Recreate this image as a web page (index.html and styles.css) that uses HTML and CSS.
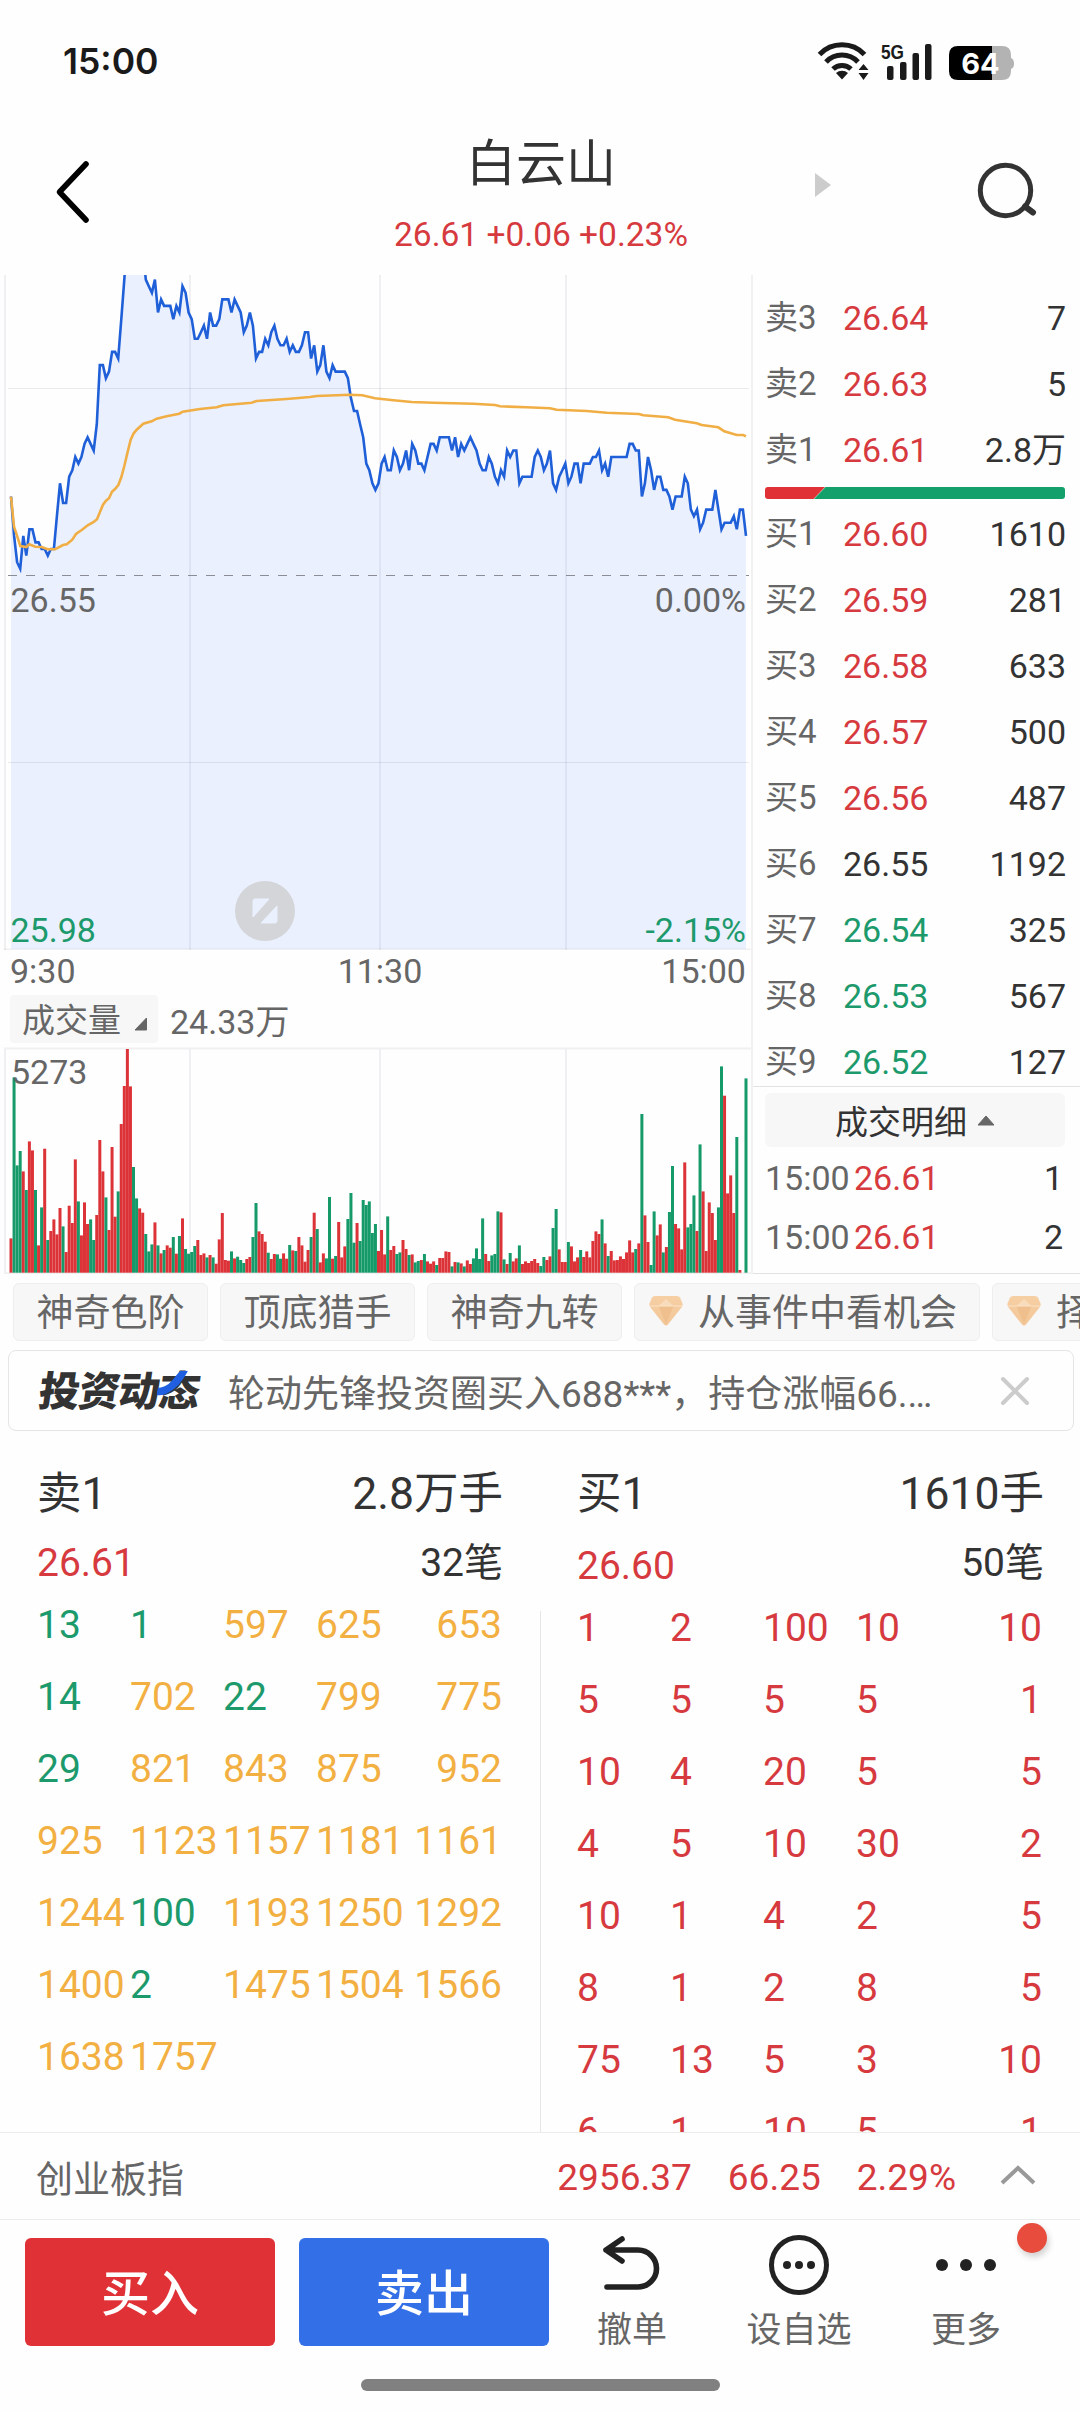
FILE: index.html
```html
<!DOCTYPE html>
<html lang="zh-CN">
<head>
<meta charset="utf-8">
<title>白云山 26.61</title>
<link rel="stylesheet" href="styles.css">
</head>
<body>
<div class="status">
  <span class="clock">15:00</span>
  <svg class="status-icons" width="204" height="44" viewBox="0 0 204 44">
    <g fill="none" stroke="#1a1a1a" stroke-width="5">
      <path d="M2.5 15.500a31 31 0 0 1 45 0"/>
      <path d="M9 23a22 22 0 0 1 32 0"/>
      <path d="M16 30a13 13 0 0 1 18 0"/>
    </g>
    <path d="M25 40.500l-6-6.500a9 9 0 0 1 12 0zM46.500 25l5 6h-10zM46.500 41l5-7h-10z" fill="#1a1a1a"/>
    <text class="net" x="64" y="20" textLength="23" lengthAdjust="spacingAndGlyphs">5G</text>
    <g fill="#1a1a1a">
      <rect x="70" y="27" width="6.500" height="14" rx="2"/><rect x="83" y="23" width="6.500" height="18" rx="2"/>
      <rect x="95.500" y="14" width="6.500" height="27" rx="2"/><rect x="108" y="5" width="6.500" height="36" rx="2"/>
    </g>
    <path d="M175 7h10q9 0 9 9v3q3 1 3 5.500t-3 5.500v2q0 9-9 9h-10z" fill="#b3b3b3"/>
    <path d="M175 7v34h-34q-9 0-9-9v-16q0-9 9-9z" fill="#000"/>
    <text class="charge" x="163.500" y="34.500" text-anchor="middle">64</text>
  </svg>
</div>

<header class="head">
  <svg class="back" width="40" height="66" viewBox="0 0 40 66"><path d="M34 5L7.500 33L34 61" fill="none" stroke="#000" stroke-width="5.600" stroke-linecap="round" stroke-linejoin="round"/></svg>
  <div class="name">
    <h1>白云山</h1>
    <p>26.61 +0.06 +0.23%</p>
  </div>
  <svg class="next" width="16" height="24" viewBox="0 0 16 24"><path d="M0 0L16 12L0 24z" fill="#ccc"/></svg>
  <svg class="search" width="64" height="64" viewBox="0 0 64 64"><g fill="none" stroke="#333" stroke-width="5"><circle cx="31.500" cy="32.500" r="25.200"/><path d="M51 48.500L59 54.500" stroke-linecap="round" stroke-width="6"/></g></svg>
</header>

<main class="quote">
  <section class="charts">
    <svg class="price" width="751" height="675" viewBox="0 275 751 675">
      <path class="area" id="area"/>
      <path class="grid-v" d="M5 275V950M190 275V950M380 275V950M566 275V950"/>
      <path class="grid-h" d="M8 388.500H749M8 762.500H749"/>
      <path class="grid-v" d="M4 949.500H751"/>
      <path class="zero" d="M8 575.500H749"/>
      <path class="line" id="line"/>
      <polyline class="avg" points="11,496.700 14,526.700 17,535.700 20.300,546 26.300,547 29.300,544.300 35.300,546.700 41.700,547 47.700,549.300 55,549.300 63,545 66.700,544.300 72.300,539.700 76,534 81.700,530 87.700,525.300 93.700,522 97,519.300 103,504.700 106,500.700 109,498.300 112,491.700 115,489 118.300,485 121.300,477.300 124.300,466 127.700,451.700 130.700,439.700 133.700,433.300 136.700,429.700 143.300,423.700 151.700,421.300 156.700,418.700 166.700,416.300 179.300,413.700 182.700,411.700 200,409 216.700,407.300 223.300,405.300 251.700,402.700 256.700,401 286.700,399 310,397 316.700,396 350,394.700 362.300,395.300 375,398.300 393.300,400.300 411.700,402 433.300,402.700 473.300,403.700 495,405 500,406.300 526.700,407.300 550,408.300 556.700,409.700 586.700,411 606.700,412.700 639,414 643.300,415.300 668.300,417.300 675,419.700 696.700,423.300 701.700,425 718.300,427.300 724.300,431.300 736.700,435 743.300,435 746,436.300"/>
      <circle cx="265" cy="911" r="30" fill="#d4d5d9"/>
      <path d="M255 899H269L253 917V901q0-2 2-2zM277 906V921q0 2-2 2H261z" fill="#eaf0fe" stroke="#eaf0fe" stroke-linejoin="round"/>
      <text class="t" x="10.500" y="612">26.55</text>
      <text class="t end" x="746" y="612">0.00%</text>
      <text class="t down" x="10.500" y="942">25.98</text>
      <text class="t end down" x="746" y="942">-2.15%</text>
    </svg>
    <div class="axis"><span>9:30</span><span>11:30</span><span>15:00</span></div>
    <div class="vol-head">
      <span class="vol-pick">成交量<svg width="14" height="14" viewBox="0 0 14 14"><path d="M12.500 1V13H1z" fill="#666" stroke="#666" stroke-linejoin="round"/></svg></span>
      <span>24.33万</span>
    </div>
    <svg class="volume" width="751" height="227" viewBox="0 1047 751 227">
      <path class="grid-v" d="M5 1049V1273.500M190 1049V1273M380 1049V1273M566 1049V1273M4 1048.500H751M4 1273.200H751"/>
      <g id="bars"></g>
      <text class="t" x="11" y="1084">5273</text>
    </svg>
  </section>

  <section class="book">
    <div class="levels">
      <div class="lv"><span>卖3</span><b class="up">26.64</b><i>7</i></div>
      <div class="lv"><span>卖2</span><b class="up">26.63</b><i>5</i></div>
      <div class="lv"><span>卖1</span><b class="up">26.61</b><i>2.8万</i></div>
      <svg class="ratio" width="300" height="12" viewBox="0 0 300 12"><path d="M3 0H60L48.500 12H3q-3 0-3-3V3q0-3 3-3z" fill="#e03136"/><path d="M60.500 0H297q3 0 3 3V9q0 3-3 3H49z" fill="#14a06a"/></svg>
      <div class="lv"><span>买1</span><b class="up">26.60</b><i>1610</i></div>
      <div class="lv"><span>买2</span><b class="up">26.59</b><i>281</i></div>
      <div class="lv"><span>买3</span><b class="up">26.58</b><i>633</i></div>
      <div class="lv"><span>买4</span><b class="up">26.57</b><i>500</i></div>
      <div class="lv"><span>买5</span><b class="up">26.56</b><i>487</i></div>
      <div class="lv"><span>买6</span><b>26.55</b><i>1192</i></div>
      <div class="lv"><span>买7</span><b class="down">26.54</b><i>325</i></div>
      <div class="lv"><span>买8</span><b class="down">26.53</b><i>567</i></div>
      <div class="lv"><span>买9</span><b class="down">26.52</b><i>127</i></div>
    </div>
    <div class="trades">
      <div class="trades-title">成交明细<svg width="18" height="11" viewBox="0 0 18 11"><path d="M9 1L17 10H1z" fill="#666" stroke="#666" stroke-linejoin="round"/></svg></div>
      <div class="tr"><span>15:00</span><b class="up">26.61</b><i>1</i></div>
      <div class="tr"><span>15:00</span><b class="up">26.61</b><i>2</i></div>
    </div>
  </section>
</main>

<svg width="0" height="0" class="defs">
  <defs>
    <linearGradient id="gem-fill" x1="0" y1="0" x2="0" y2="1"><stop offset="0" stop-color="#f6cfa4"/><stop offset="1" stop-color="#f3c797"/></linearGradient>
    <symbol id="gem" viewBox="0 0 34 30">
      <path d="M6 0H28Q30 0 31 1.500L33.500 7.500Q34 9.500 32.500 11.500L19 28.500Q17 30.500 15 28.500L1.500 11.500Q0 9.500 .5 7.500L3 1.500Q4 0 6 0z" fill="url(#gem-fill)"/>
      <path d="M9.500 10L17 3L24.500 10z" fill="#f9dcbc"/><path d="M9.500 10H24.500L17 28.500z" fill="#efc08d"/><path d="M1 10H33" stroke="#fae3c8"/>
    </symbol>
  </defs>
</svg>

<nav class="chips">
  <span class="chip">神奇色阶</span><span class="chip">顶底猎手</span><span class="chip">神奇九转</span>
  <span class="chip gem"><svg width="34" height="30"><use href="#gem"/></svg>从事件中看机会</span>
  <span class="chip gem"><svg width="34" height="30"><use href="#gem"/></svg>择时</span>
</nav>

<div class="news">
  <strong class="brand">投资动态<svg width="28" height="26" viewBox="0 0 28 26"><path d="M20 0H28Q22 16 11 22Q6 25 0 24V17Q9 16 13 10Q16 6 20 0z" fill="#1f5fe0"/></svg></strong>
  <span class="news-text">轮动先锋投资圈买入688***，持仓涨幅66.…</span>
  <svg width="30" height="30" viewBox="0 0 30 30"><path d="M3 3L27 27M27 3L3 27" stroke="#ccc" stroke-width="4" stroke-linecap="round"/></svg>
</div>

<section class="queues">
  <div class="queue">
    <div class="q-top"><span>卖1</span><span>2.8万手</span></div>
    <div class="q-sub"><span class="up">26.61</span><span>32笔</span></div>
    <div class="cells">
      <b class="down">13</b><b class="down">1</b><b>597</b><b>625</b><b>653</b>
      <b class="down">14</b><b>702</b><b class="down">22</b><b>799</b><b>775</b>
      <b class="down">29</b><b>821</b><b>843</b><b>875</b><b>952</b>
      <b>925</b><b>1123</b><b>1157</b><b>1181</b><b>1161</b>
      <b>1244</b><b class="down">100</b><b>1193</b><b>1250</b><b>1292</b>
      <b>1400</b><b class="down">2</b><b>1475</b><b>1504</b><b>1566</b>
      <b>1638</b><b>1757</b>
    </div>
  </div>
  <div class="rule"></div>
  <div class="queue buy">
    <div class="q-top"><span>买1</span><span>1610手</span></div>
    <div class="q-sub"><span class="up">26.60</span><span>50笔</span></div>
    <div class="cells">
      <b>1</b><b>2</b><b>100</b><b>10</b><b>10</b>
      <b>5</b><b>5</b><b>5</b><b>5</b><b>1</b>
      <b>10</b><b>4</b><b>20</b><b>5</b><b>5</b>
      <b>4</b><b>5</b><b>10</b><b>30</b><b>2</b>
      <b>10</b><b>1</b><b>4</b><b>2</b><b>5</b>
      <b>8</b><b>1</b><b>2</b><b>8</b><b>5</b>
      <b>75</b><b>13</b><b>5</b><b>3</b><b>10</b>
      <b>6</b><b>1</b><b>10</b><b>5</b><b>1</b>
    </div>
  </div>
</section>

<div class="index">
  <span class="index-name">创业板指</span>
  <span class="up">2956.37</span><span class="up">66.25</span><span class="up">2.29%</span>
  <svg width="38" height="22" viewBox="0 0 38 22"><path d="M3 19L19 4L35 19" fill="none" stroke="#999" stroke-width="4"/></svg>
</div>

<footer class="actions">
  <button class="btn buy-btn"><span>买入</span></button>
  <button class="btn sell-btn"><span>卖出</span></button>
  <div class="act cancel">
    <svg width="64" height="64" viewBox="0 0 64 64"><path d="M6 17H38a18.500 18.500 0 0 1 0 37H7M22 6L6 17L22 28" fill="none" stroke="#222" stroke-width="5.600" stroke-linecap="round" stroke-linejoin="round"/></svg>
    撤单
  </div>
  <div class="act watch">
    <svg width="64" height="64" viewBox="0 0 64 64"><circle cx="32" cy="32" r="27.500" fill="none" stroke="#222" stroke-width="5"/><g fill="#222"><circle cx="20" cy="32" r="4"/><circle cx="32" cy="32" r="4"/><circle cx="44" cy="32" r="4"/></g></svg>
    设自选
  </div>
  <div class="act more">
    <svg width="64" height="64" viewBox="0 0 64 64"><g fill="#222"><circle cx="8" cy="32" r="6"/><circle cx="32" cy="32" r="6"/><circle cx="56" cy="32" r="6"/></g></svg>
    更多
    <span class="dot"></span>
  </div>
</footer>
<div class="home"></div>
<script src="chart.js"></script>
</body>
</html>
```
FILE: styles.css
```css
* { box-sizing: border-box; margin: 0; padding: 0; }
b, i, h1 { font-weight: 400; font-style: normal; }
svg { display: block; flex: none; }

body {
  width: 1080px;
  height: 2412px;
  overflow: hidden;
  background: #fefefe;
  color: #333;
  font-family: Roboto, "Noto Sans CJK SC", sans-serif;
  font-size: 34px;
}

.up { color: #d63a3e; }
.down { color: #1d9a6c; fill: #1d9a6c; }

/* Status bar */
.status { display: flex; justify-content: space-between; height: 125px; padding: 39px 59px 0 63px; }
.clock { font: 600 35.5px/46px Inter, Roboto, sans-serif; color: #1a1a1a; }
.net { font: 700 21px "Liberation Sans", sans-serif; fill: #1a1a1a; }
.charge { font: 700 29px Inter, sans-serif; fill: #fff; }

/* Title bar */
.head { display: flex; height: 150px; }
.back { margin: 34px 0 0 52px; }
.name { width: 400px; margin-left: 249px; text-align: center; }
.name h1 { font-size: 50px; line-height: 64px; margin-top: 7px; }
.name p { font-size: 33.5px; line-height: 40px; color: #d63a3e; margin-top: 19px; }
.next { margin: 48px 0 0 74px; }
.search { margin: 33px 0 0 143px; }

/* Quote: charts and order book */
.quote { display: grid; grid-template-columns: 753px 327px; height: 999px; }
.charts { border-right: 2px solid #f1f1f1; }
.area { fill: #eaf0fe; }
.line { fill: none; stroke: #1f5fd8; stroke-width: 2.6; }
.avg { fill: none; stroke: #f0ae45; stroke-width: 2.6; }
.grid-v { fill: none; stroke: rgba(60, 60, 80, .07); stroke-width: 2; }
.grid-h { fill: none; stroke: rgba(60, 60, 80, .1); stroke-width: 1; }
.zero { stroke: #8a8d96; stroke-width: 1.2; stroke-dasharray: 9 9; }
.t { font-size: 34px; fill: #666; }
.t.down { fill: #1d9a6c; }
.end { text-anchor: end; }
.axis { display: grid; grid-template-columns: 1fr 1fr 1fr; height: 45px; padding: 0 5px 0 10px; line-height: 43px; color: #666; }
.axis span:nth-child(2) { text-align: center; padding-left: 4px; }
.axis span:nth-child(3) { text-align: right; }
.vol-head { display: flex; gap: 12px; height: 52px; padding-left: 10px; line-height: 54px; color: #666; }
.vol-pick { display: flex; align-items: flex-end; gap: 13px; height: 48px; width: 148px; padding: 0 0 12px 12px; border-radius: 4px; background: #f7f7f7; font-size: 33px; line-height: 20px; }

.levels { height: 812px; padding: 10px 14px 0 12px; overflow: hidden; border-bottom: 1px solid #e3e3e3; }
.lv { display: grid; grid-template-columns: 78px 110px 1fr; height: 66px; line-height: 66px; }
.lv span { font-size: 33px; color: #666; }
.lv i, .tr i { text-align: right; }
.ratio { margin: 4px 0 2px; }
.trades { height: 187px; padding: 6px 15px 0 12px; border-bottom: 1px solid #e3e3e3; }
.trades-title { display: flex; align-items: center; justify-content: center; gap: 10px; height: 54px; margin-bottom: 2px; border-radius: 6px; background: #f7f7f7; font-size: 33px; }
.tr { display: grid; grid-template-columns: 89px 110px 1fr; height: 59px; line-height: 59px; padding-right: 2px; }
.tr span { color: #666; }

/* Indicator chips */
.defs { position: absolute; }
.chips { display: flex; gap: 12px; height: 76px; padding: 9px 0 0 13px; overflow: hidden; }
.chip { flex: none; display: flex; align-items: center; height: 58px; padding: 4px 22.5px 0; border: 1px solid #eee; border-radius: 6px; background: #f7f7f7; color: #666; font-size: 37px; line-height: 56px; white-space: nowrap; }
.chip.gem { gap: 15px; padding: 4px 22px 0 14px; }
.chip.gem svg { margin-bottom: 7px; }

/* Promotion strip */
.news { display: flex; align-items: center; width: 1066px; height: 81px; margin-left: 8px; padding: 0 43px 0 30px; border: 1px solid #e5e5e5; border-radius: 8px; font-size: 37px; color: #666; }
.brand { position: relative; width: 163px; margin: 3px 26px 0 0; font-weight: 900; font-size: 41px; line-height: 50px; letter-spacing: -1px; color: #333; transform: skewX(-8deg); white-space: nowrap; }
.brand svg { position: absolute; left: 118px; top: 4px; }
.news-text { flex: 1; white-space: nowrap; }

/* Order queues */
.queues { display: flex; height: 701px; overflow: hidden; }
.queue { width: 540px; padding: 37px 37px 0 37px; }
.queue.buy { width: 539px; padding: 37px 36px 0 36px; }
.rule { flex: none; width: 1px; height: 522px; margin-top: 180px; background: #e6e6e6; }
.q-top, .q-sub { display: flex; justify-content: space-between; height: 52px; line-height: 52px; }
.q-top { font-size: 44.5px; margin-bottom: 17px; }
.q-sub { font-size: 39px; }
.cells { display: grid; grid-template-columns: repeat(5, 93px); grid-auto-rows: 72px; line-height: 72px; font-size: 39px; color: #f3b042; }
.cells b:nth-child(5n) { text-align: right; }
.buy .cells { margin-top: 3px; color: #d63a3e; }
.buy .q-sub .up { padding-top: 3px; }

/* Index ticker */
.index { display: flex; align-items: center; height: 88px; padding: 2px 43px 0 36px; border: solid #ececec; border-width: 1px 0; font-size: 37px; }
.index .up { margin-right: 36px; }
.index .index-name { flex: 1; font-size: 37px; color: #666; }
.index svg { margin: 0 0 5px 7px; }

/* Bottom actions */
.actions { display: flex; height: 159px; padding: 18px 0 0 25px; }
.btn { width: 250px; height: 108px; margin-right: 24px; padding-top: 5px; border: 0; border-radius: 6px; color: #fff; font: 500 49px/103px Roboto, "Noto Sans CJK SC", sans-serif; }
.buy-btn { background: #df3136; }
.sell-btn { background: #336fe6; }
.act { position: relative; display: flex; flex-direction: column; align-items: center; font-size: 35px; line-height: 48px; color: #666; margin-top: -5px; }
.act svg { margin-bottom: 10px; }
.cancel { width: 118px; }
.watch { width: 216px; }
.more { width: 118px; }
.dot { position: absolute; left: 110px; top: -10px; width: 30px; height: 30px; border-radius: 50%; background: #e84c3d; box-shadow: 2px 4px 6px rgba(0, 0, 0, .18); }
.home { width: 359px; height: 12px; margin: 0 auto; border-radius: 6px; background: #808080; }
```
FILE: chart.js
```js
// One entry per trading minute, as cents above the previous close of 26.55.
const ticks = [
  12,6,2,1,6,3,7,7,5,5,4,4,3,4,4,9,14,11,11,15,16,18,17,18,20,21,20,19,23,32,
  32,30,31,34,34,33,39,45,52,56,55,57,54,50,45,44,43,45,40,42,41,41,41,39,41,40,44,43,40,39,
  36,36,37,38,36,40,38,38,39,42,42,42,40,42,41,40,37,38,40,38,33,34,34,36,35,37,38,36,35,35,
  36,34,35,34,34,35,37,37,33,35,31,32,35,31,30,32,31,31,31,31,30,27,25,25,23,21,17,16,14,13,
  14,17,18,16,16,19,18,16,17,19,16,20,19,17,17,16,18,20,20,19,21,21,21,21,19,21,18,20,19,20,
  21,20,19,17,16,16,18,17,15,14,16,15,19,18,19,19,14,15,15,15,15,18,19,18,16,17,19,14,13,15,
  16,17,14,15,17,17,14,17,17,17,18,18,19,16,17,15,18,18,18,18,18,18,20,20,19,19,12,14,18,16,
  13,15,15,13,13,12,10,12,12,12,15,14,10,9,10,7,8,10,10,10,13,10,7,8,8,8,9,7,10,10,6
];
const LEFT = 11, STEP = 735 / 240, ZERO = 575.3, CENT = 6.57;
const path = "M" + ticks.map((t, i) => (LEFT + i * STEP).toFixed(1) + " " + (ZERO - t * CENT).toFixed(1)).join("L");
document.getElementById("line").setAttribute("d", path);
document.getElementById("area").setAttribute("d", path + "V949H11Z");

// Volume per minute: direction, then depth of the bar's top on a 0-698 scale.
const volume = `
r595 g112 g376 g333 r394 g450 r304 r331 g450 r616 g502 r326 g600 r573 r538 r583 r504 g559 r636 r497
r549 r358 g484 r586 r487 r552 g538 g600 r525 r300 r394 g472 r570 r321 r530 g454 r252 r138 r27 r139
g381 g475 r505 r518 g582 g634 g613 r547 g616 r640 g630 r616 r623 g591 r641 g588 r535 g627 g641 g636
g618 r600 r645 r640 g652 r645 g652 r671 r598 r519 r660 r662 g634 r655 g650 g660 g669 r657 r651 g591
g489 r574 r582 r605 g638 r657 r642 g643 g656 r640 r656 g615 r631 g633 r591 r616 r665 r630 g591 r518
g567 r667 r640 g655 g471 r656 g648 r546 r652 r619 g537 g459 g608 r549 g603 g480 g495 g484 g579 g552
r633 r570 r643 g529 r630 r618 g642 g637 r600 r627 g645 r643 g667 g663 r660 g642 r664 r671 r664 g675
r654 r654 r634 r636 g679 r666 g667 r670 g679 r661 r672 g655 g625 g657 g535 r642 r663 g646 g642 g514
r517 g658 r672 g639 r664 r655 g616 r672 r664 r669 r663 r657 r669 g678 g651 r660 r649 g564 g507 r628
r666 r666 g606 r619 r664 r652 g630 r651 r634 r652 r603 r574 r582 g538 r610 g648 r633 r661 r660 r649
r657 r637 r601 r637 g627 r610 g222 r526 r606 g675 g514 r586 r553 g637 r621 g516 g378 r552 r565 r628
r367 g562 g552 g466 r573 g313 r454 r633 r487 r519 r600 g502 g79 r167 r460 r406 r519 g291 r690 r698 g115`;
const BASE = 1272.7;
document.getElementById("bars").innerHTML = volume.trim().split(/\s+/).map((v, i) => {
  const h = (698 - +v.slice(1)) / 3;
  const x = LEFT + i * STEP - 1.5;
  return `<rect x="${x.toFixed(2)}" y="${(BASE - h).toFixed(1)}" width="3" height="${h.toFixed(1)}" fill="${v[0] === "r" ? "#dc3338" : "#179a69"}"/>`;
}).join("");
```
